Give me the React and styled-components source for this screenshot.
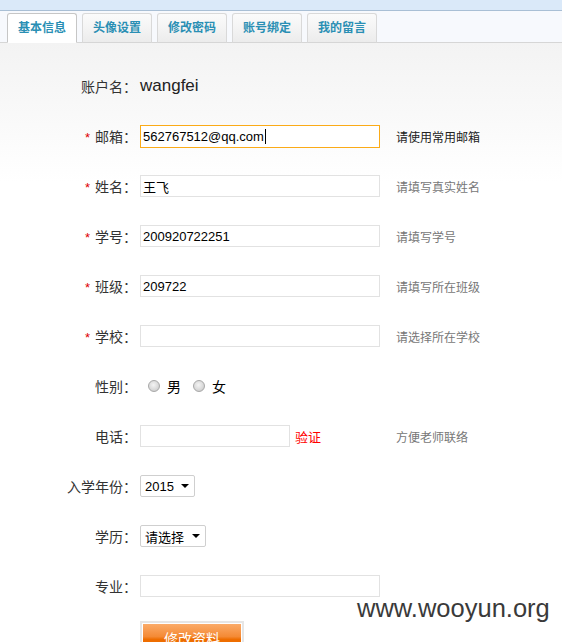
import React from 'react';
import styled, { createGlobalStyle } from 'styled-components';

const GlobalStyle = createGlobalStyle`
  html, body {
    margin: 0;
    padding: 0;
    background: #fff;
  }
  body {
    font-family: "Liberation Sans", "Noto Sans CJK SC", sans-serif;
    color: #333;
  }
`;

const Page = styled.div`
  position: relative;
  width: 562px;
  height: 642px;
  overflow: hidden;
`;

const TopBar = styled.div`
  height: 10px;
  background: #dae9f9;
  border-bottom: 1px solid #a9bfd5;
`;

const TabStrip = styled.div`
  display: flex;
  align-items: flex-end;
  gap: 5px;
  height: 31px;
  padding-left: 7px;
  background: #f7f9fd;
  border-bottom: 1px solid #d6d6d6;
`;

const Tab = styled.div`
  box-sizing: border-box;
  width: 70px;
  height: 30px;
  margin-bottom: -1px;
  padding-bottom: 3px;
  display: flex;
  align-items: center;
  justify-content: center;
  font-family: "Noto Sans CJK SC", sans-serif;
  font-size: 12px;
  font-weight: bold;
  color: #2a8fb4;
  border: 1px solid ${({ $active }) => ($active ? '#c6c6c6' : '#d9d9d9')};
  border-bottom: ${({ $active }) => ($active ? '1px solid #fff' : '1px solid #d6d6d6')};
  border-radius: 3px 3px 0 0;
  background: ${({ $active }) => ($active ? '#fff' : 'linear-gradient(#fbfbfb, #ececec)')};
`;

const Content = styled.div`
  padding-top: 18px;
  background: linear-gradient(#f3f3f3 0px, #ffffff 140px);
  min-height: 600px;
`;

const Row = styled.div`
  display: flex;
  align-items: center;
  height: 50px;
`;

const Label = styled.div`
  box-sizing: border-box;
  width: 140px;
  padding-right: 3px;
  text-align: right;
  font-family: "Noto Sans CJK SC", sans-serif;
  font-size: 14px;
  color: #333;
  white-space: nowrap;
`;

const Star = styled.span`
  color: #d00;
  font-family: "Liberation Sans", sans-serif;
  font-size: 13px;
  margin-right: 5px;
`;

const Field = styled.div`
  width: 256px;
  display: flex;
  align-items: center;
  gap: 5px;
`;

const Input = styled.div`
  box-sizing: border-box;
  width: ${({ $w }) => $w || 240}px;
  height: ${({ $focus }) => ($focus ? 23 : 22)}px;
  padding-left: 2px;
  display: flex;
  align-items: center;
  background: #fff;
  border: 1px solid ${({ $focus }) => ($focus ? '#fbab18' : '#e2e2e2')};
  font-family: "Liberation Sans", "Noto Sans CJK SC", sans-serif;
  font-size: 13px;
  color: #000;
`;

const Caret = styled.span`
  display: inline-block;
  width: 1px;
  height: 15px;
  margin-left: 1px;
  background: #000;
`;

const UserName = styled.span`
  font-size: 17px;
  color: #222;
`;

const Hint = styled.div`
  font-family: "Noto Sans CJK SC", sans-serif;
  font-size: 12px;
  color: ${({ $strong }) => ($strong ? '#222' : '#777')};
`;

const Verify = styled.span`
  font-family: "Noto Sans CJK SC", sans-serif;
  font-size: 13px;
  color: #f00;
`;

const RadioGroup = styled.div`
  display: flex;
  align-items: center;
  padding-left: 8px;
  font-family: "Noto Sans CJK SC", sans-serif;
  font-size: 14px;
  color: #000;
`;

const Radio = styled.span`
  box-sizing: border-box;
  width: 12px;
  height: 12px;
  border-radius: 50%;
  border: 1px solid #a8a8a8;
  background: radial-gradient(circle at 45% 40%, #f4f4f4 0%, #d8d8d8 60%, #bcbcbc 100%);
  margin-right: 7px;
`;

const RadioText = styled.span`
  margin-right: 12px;
`;

const Select = styled.div`
  box-sizing: border-box;
  width: ${({ $w }) => $w}px;
  height: 22px;
  padding: 0 5px 0 4px;
  display: flex;
  align-items: center;
  justify-content: space-between;
  background: #fff;
  border: 1px solid #cfcfcf;
  border-radius: 2px;
  font-family: "Liberation Sans", "Noto Sans CJK SC", sans-serif;
  font-size: 13px;
  color: #000;
`;

const Arrow = styled.span`
  width: 0;
  height: 0;
  border-left: 4px solid transparent;
  border-right: 4px solid transparent;
  border-top: 4px solid #000;
`;

const ButtonWrap = styled.div`
  margin-left: 140px;
  margin-top: 10px;
  width: 104px;
  box-sizing: border-box;
  padding: 2px;
  background: #e6e6e6;
`;

const Button = styled.div`
  height: 28px;
  display: flex;
  align-items: center;
  justify-content: center;
  border: 1px solid #fff;
  background: linear-gradient(#fbab69 0%, #f48a35 45%, #ee6d00 55%, #ee6d00 100%);
  font-family: "Noto Sans CJK SC", sans-serif;
  font-size: 14px;
  color: #fff;
`;

const Watermark = styled.div`
  position: absolute;
  left: 357px;
  top: 594px;
  font-family: "Liberation Sans", sans-serif;
  font-size: 25.5px;
  color: #3a3a3a;
  text-shadow: 0 0 2px #fff, 0 0 2px #fff;
`;

const tabs = ['基本信息', '头像设置', '修改密码', '账号绑定', '我的留言'];

const textRows = [
  { label: '邮箱：', value: '562767512@qq.com', hint: '请使用常用邮箱', focus: true },
  { label: '姓名：', value: '王飞', hint: '请填写真实姓名' },
  { label: '学号：', value: '200920722251', hint: '请填写学号' },
  { label: '班级：', value: '209722', hint: '请填写所在班级' },
  { label: '学校：', value: '', hint: '请选择所在学校' },
];

export default function App() {
  return (
    <Page>
      <GlobalStyle />
      <TopBar />
      <TabStrip>
        {tabs.map((t, i) => (
          <Tab key={t} $active={i === 0}>{t}</Tab>
        ))}
      </TabStrip>
      <Content>
        <Row>
          <Label>账户名：</Label>
          <UserName>wangfei</UserName>
        </Row>
        {textRows.map((r) => (
          <Row key={r.label}>
            <Label><Star>*</Star>{r.label}</Label>
            <Field>
              <Input $focus={r.focus}>
                {r.value}
                {r.focus && <Caret />}
              </Input>
            </Field>
            <Hint $strong={r.focus}>{r.hint}</Hint>
          </Row>
        ))}
        <Row>
          <Label>性别：</Label>
          <RadioGroup>
            <Radio /><RadioText>男</RadioText>
            <Radio /><RadioText>女</RadioText>
          </RadioGroup>
        </Row>
        <Row>
          <Label>电话：</Label>
          <Field>
            <Input $w={150} />
            <Verify>验证</Verify>
          </Field>
          <Hint>方便老师联络</Hint>
        </Row>
        <Row>
          <Label>入学年份：</Label>
          <Select $w={55}>2015<Arrow /></Select>
        </Row>
        <Row>
          <Label>学历：</Label>
          <Select $w={66}>请选择<Arrow /></Select>
        </Row>
        <Row>
          <Label>专业：</Label>
          <Field>
            <Input />
          </Field>
        </Row>
        <ButtonWrap>
          <Button>修改资料</Button>
        </ButtonWrap>
      </Content>
      <Watermark>www.wooyun.org</Watermark>
    </Page>
  );
}
